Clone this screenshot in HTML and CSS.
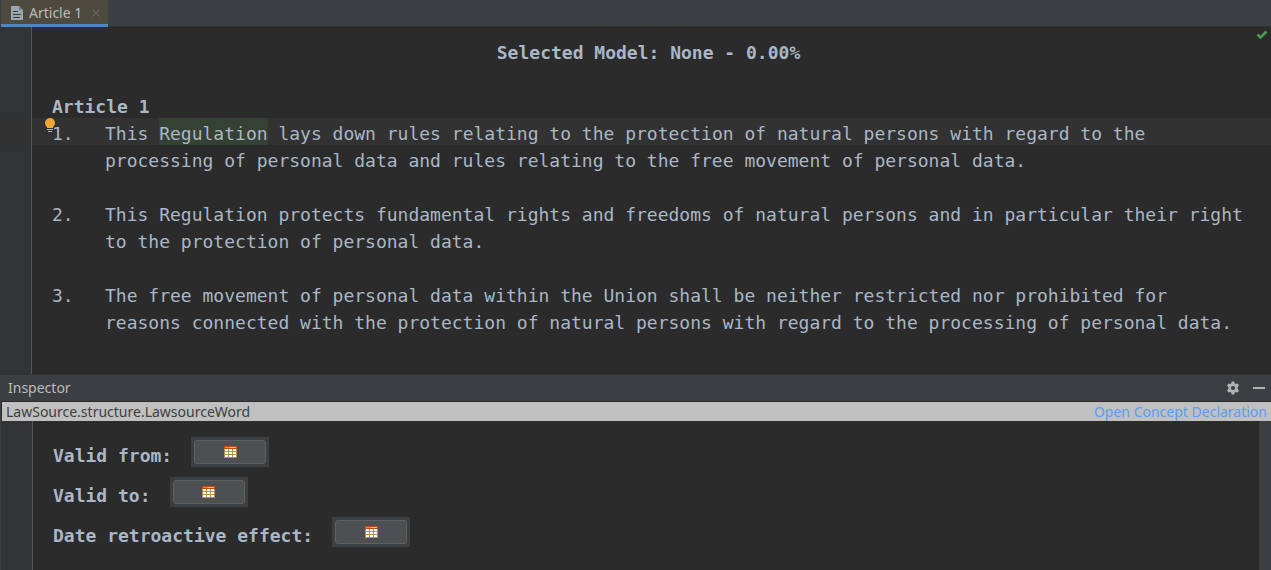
FILE: index.html
```
<!DOCTYPE html>
<html lang="en">
<head>
<meta charset="utf-8">
<title>Article 1</title>
<link rel="stylesheet" href="styles.css">
</head>
<body>
<div class="app">
  <nav class="tabs">
    <div class="tab">
      <svg class="tab-icon" width="12" height="14" viewBox="0 0 12 14" aria-hidden="true"><path d="M0 0h8l4 4v10H0z" fill="#9aa7b0"/><path d="M8 0v4h4z" fill="#6f7a82"/><path d="M2 5.500h5M2 8.500h8M2 11.500h7" stroke="#383a3b" stroke-width="1.200"/></svg>
      <span class="tab-name">Article 1</span>
      <button class="tab-close" aria-label="Close tab"><svg width="8" height="8" viewBox="0 0 8 8"><path d="M.5.5l7 7m0-7l-7 7" stroke="#70706a"/></svg></button>
    </div>
  </nav>
  <main class="editor">
    <svg class="check" width="12" height="10" viewBox="0 0 12 10" aria-label="No problems"><path d="M1.500 4.500l3 3L10.500 1.500" fill="none" stroke="#499c54" stroke-width="2.600"/></svg>
    <h1 class="model">Selected Model: None - 0.00%</h1>
    <h2 class="heading">Article 1</h2>
    <div class="paragraph">
      <div class="row active"><span class="number">1.<svg class="bulb" width="12" height="16" viewBox="0 0 12 16" aria-hidden="true"><path d="M6 0a5 5 0 0 1 5 5c0 2-1 3-2 4v1H3V9C2 8 1 7 1 5a5 5 0 0 1 5-5z" fill="#f0a732"/><path d="M3 11.500h6M4 13.500h4" stroke="#afb1b3"/></svg></span><span>This <mark class="word">Regulation</mark> lays down rules relating to the protection of natural persons with regard to the</span></div>
      <div class="row"><span class="number"></span><span>processing of personal data and rules relating to the free movement of personal data.</span></div>
    </div>
    <div class="paragraph">
      <div class="row"><span class="number">2.</span><span>This Regulation protects fundamental rights and freedoms of natural persons and in particular their right</span></div>
      <div class="row"><span class="number"></span><span>to the protection of personal data.</span></div>
    </div>
    <div class="paragraph">
      <div class="row"><span class="number">3.</span><span>The free movement of personal data within the Union shall be neither restricted nor prohibited for</span></div>
      <div class="row"><span class="number"></span><span>reasons connected with the protection of natural persons with regard to the processing of personal data.</span></div>
    </div>
  </main>
  <section class="inspector">
    <header class="panel-title">
      <span class="panel-name">Inspector</span>
      <button class="tool" aria-label="Settings"><svg width="12" height="14" viewBox="0 0 12 14"><path fill="#afb1b3" fill-rule="evenodd" d="M4.600.5h2.800l.4 1.900 1.100.6 1.800-.6L12 4.600l-1.300 1.500v1.800L12 9.400l-1.300 2.200-1.800-.6-1.100.6-.4 1.900H4.600l-.4-1.900-1.100-.6-1.800.6L0 9.400l1.300-1.500V6.100L0 4.600l1.300-2.200 1.800.6 1.100-.6zM6 4.900a2.100 2.100 0 1 0 0 4.200 2.100 2.100 0 0 0 0-4.200z"/></svg></button>
      <button class="tool" aria-label="Hide"><svg width="12" height="14" viewBox="0 0 12 14"><path d="M0 6h12v2H0z" fill="#afb1b3"/></svg></button>
    </header>
    <div class="concept"><span>LawSource.structure.LawsourceWord</span><a class="link" href="#">Open Concept Declaration</a></div>
    <div class="fields">
      <div class="field"><label for="from">Valid from:</label><span class="frame"><button class="date" id="from"><svg width="13" height="12" viewBox="0 0 13 12" aria-hidden="true"><path d="M0 0h13v12H0z" fill="#b0924c"/><path d="M0 0h13v3H0z" fill="#b8500f"/><path d="M1 1h5v1H1z" fill="#f08a24"/><path d="M6 1h6v1H6z" fill="#ffc64a"/><path d="M1 3h3v2H1zM5 3h3v2H5zM9 3h3v2H9zM1 6h3v2H1zM5 6h3v2H5zM9 6h3v2H9zM1 9h3v2H1zM5 9h3v2H5zM9 9h3v2H9z" fill="#fff"/></svg></button></span></div>
      <div class="field"><label for="to">Valid to:</label><span class="frame"><button class="date" id="to"><svg width="13" height="12" viewBox="0 0 13 12" aria-hidden="true"><path d="M0 0h13v12H0z" fill="#b0924c"/><path d="M0 0h13v3H0z" fill="#b8500f"/><path d="M1 1h5v1H1z" fill="#f08a24"/><path d="M6 1h6v1H6z" fill="#ffc64a"/><path d="M1 3h3v2H1zM5 3h3v2H5zM9 3h3v2H9zM1 6h3v2H1zM5 6h3v2H5zM9 6h3v2H9zM1 9h3v2H1zM5 9h3v2H5zM9 9h3v2H9z" fill="#fff"/></svg></button></span></div>
      <div class="field"><label for="retro">Date retroactive effect:</label><span class="frame"><button class="date" id="retro"><svg width="13" height="12" viewBox="0 0 13 12" aria-hidden="true"><path d="M0 0h13v12H0z" fill="#b0924c"/><path d="M0 0h13v3H0z" fill="#b8500f"/><path d="M1 1h5v1H1z" fill="#f08a24"/><path d="M6 1h6v1H6z" fill="#ffc64a"/><path d="M1 3h3v2H1zM5 3h3v2H5zM9 3h3v2H9zM1 6h3v2H1zM5 6h3v2H5zM9 6h3v2H9zM1 9h3v2H1zM5 9h3v2H5zM9 9h3v2H9z" fill="#fff"/></svg></button></span></div>
    </div>
  </section>
</div>
</body>
</html>
```
FILE: styles.css
```
* { box-sizing: border-box; }
body {
  margin: 0;
  background: #2b2b2b;
  color: #a9b7c6;
  font: 18px/27px "DejaVu Sans Mono", monospace;
}
button { margin: 0; padding: 0; border: 0; background: none; }
svg { display: block; }
.app { display: flex; flex-direction: column; min-height: 100vh; }
.tabs {
  display: flex;
  padding-left: 1px;
  background: #3c3f41;
  box-shadow: inset 0 -1px #323232;
  font: 14px/22px "Noto Sans", sans-serif;
  color: #bbbbbb;
}
.tab {
  display: flex;
  align-items: center;
  padding: 2px 8px 0 10px;
  background: #4e4a3f;
  border-bottom: 3px solid #4a88c7;
}
.tab-name { margin: 0 10px 0 6px; }
.editor {
  position: relative;
  padding: 12px 0 13px 32px;
  background: linear-gradient(90deg, #313335 31px, #555555 31px, #555555 32px, #2b2b2b 32px);
}
.check { position: absolute; top: 3px; right: 3px; }
.model, .heading { margin: 0; font: inherit; font-weight: 700; }
.model { text-align: center; padding-right: 6px; }
.heading { padding: 27px 0 0 20px; margin-bottom: -2px; }
.paragraph { padding-bottom: 27px; }
.row {
  display: flex;
  padding: 4px 0 0 20px;
  line-height: 23px;
  white-space: nowrap;
}
.active { background: #323232; box-shadow: -1px 0 #555555, -32px 0 #323232; }
.number { position: relative; flex: 0 0 53px; }
.bulb { position: absolute; top: -4px; left: -8px; }
.word { padding: 5px 0 1px; background: #344134; color: inherit; }
.inspector { display: flex; flex-direction: column; flex: 1; border-left: 1px solid #3c3f41; border-top: 1px solid #323232; }
.panel-title {
  display: flex;
  align-items: center;
  gap: 14px;
  padding: 0 6px 0 7px;
  background: #3c3f41;
  border-bottom: 1px solid #2b2b2b;
  font: 14px/26px "Noto Sans", sans-serif;
  color: #bbbbbb;
}
.panel-name { flex: 1; }
.concept {
  display: flex;
  justify-content: space-between;
  margin-left: 1px;
  padding: 0 4px;
  background: #c0c0c0;
  color: #3c3f41;
  font: 14px/19px "Noto Sans", sans-serif;
}
.link { color: #589df6; text-decoration: none; }
.fields {
  display: flex;
  flex-direction: column;
  flex: 1;
  gap: 10px;
  padding: 16px 0 16px 52px;
  border-right: 12px solid #3c3f41;
  background: linear-gradient(90deg, #313335 31px, #555555 31px, #555555 32px, #2b2b2b 32px);
  font-weight: 700;
}
.field { display: flex; gap: 19px; height: 30px; }
.field label { padding-top: 5px; }
.frame { display: flex; padding: 3px; width: 78px; background: #3c3f41; }
.date {
  display: flex;
  flex: 1;
  align-items: center;
  justify-content: center;
  border: 1px solid #5e6060;
  border-radius: 3px;
  background: #4c5052;
}
```
